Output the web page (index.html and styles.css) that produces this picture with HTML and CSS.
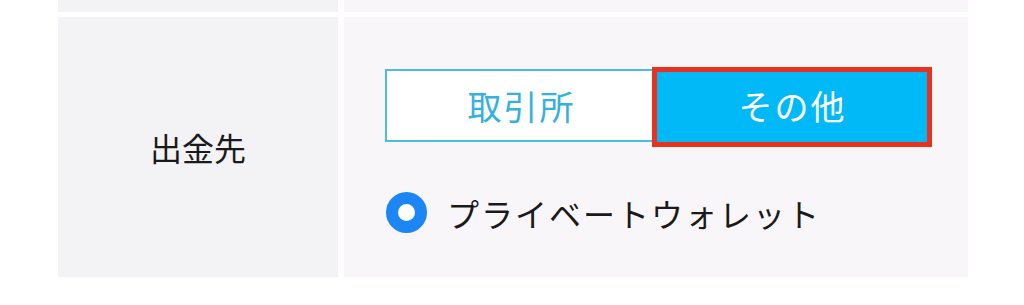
FILE: index.html
```html
<!DOCTYPE html>
<html lang="ja">
<head>
<meta charset="utf-8">
<link rel="stylesheet" href="styles.css">
</head>
<body>
<div class="table">
  <div class="label-cell"></div>
  <div class="value-cell"></div>
  <div class="label-cell label-main">出金先</div>
  <div class="value-cell value-main">
    <div class="seg">
      <div class="seg-btn seg-off">取引所</div>
      <div class="seg-btn seg-on">その他<span class="highlight"></span></div>
    </div>
    <div class="radio-row">
      <span class="radio"></span>
      <span class="radio-text">プライベートウォレット</span>
    </div>
  </div>
</div>
</body>
</html>
```
FILE: styles.css
```css
html, body {
  margin: 0;
  padding: 0;
  background: #ffffff;
}
body {
  font-family: "Noto Sans CJK JP", "Noto Sans", sans-serif;
  color: #1a1a1a;
}
.table {
  margin-left: 58px;
  width: 910px;
  display: grid;
  grid-template-columns: 280px 624px;
  grid-template-rows: 12px 260px;
  column-gap: 6px;
  row-gap: 5px;
}
.label-cell {
  background: #f3f2f5;
}
.value-cell {
  background: #f8f6f9;
}
.label-main {
  display: flex;
  align-items: center;
  justify-content: center;
  font-size: 32px;
  line-height: 1;
  color: #1a1a1a;
}
.value-main {
  padding: 52px 0 0 41px;
  box-sizing: border-box;
}
.seg {
  display: flex;
}
.seg-btn {
  width: 271px;
  height: 73px;
  box-sizing: border-box;
  display: flex;
  align-items: center;
  justify-content: center;
  font-size: 34px;
  letter-spacing: 2px;
  text-indent: 2px;
  line-height: 1;
}
.seg-off {
  border: 2px solid #48bddf;
  background: #ffffff;
  color: #34b1dc;
}
.seg-on {
  position: relative;
  background: #00b9f6;
  color: #ffffff;
}
.highlight {
  position: absolute;
  left: -4px;
  top: -2px;
  width: 280px;
  height: 80px;
  border: 5px solid #e8321f;
  box-sizing: border-box;
}
.radio-row {
  display: flex;
  align-items: center;
  margin-top: 50px;
  margin-left: 1px;
}
.radio {
  width: 41px;
  height: 41px;
  box-sizing: border-box;
  border-radius: 50%;
  border: 12px solid #1c87f4;
  background: #ffffff;
  flex: none;
}
.radio-text {
  margin-left: 20px;
  font-size: 32px;
  letter-spacing: 2px;
  line-height: 1;
  color: #1a1a1a;
}
```
